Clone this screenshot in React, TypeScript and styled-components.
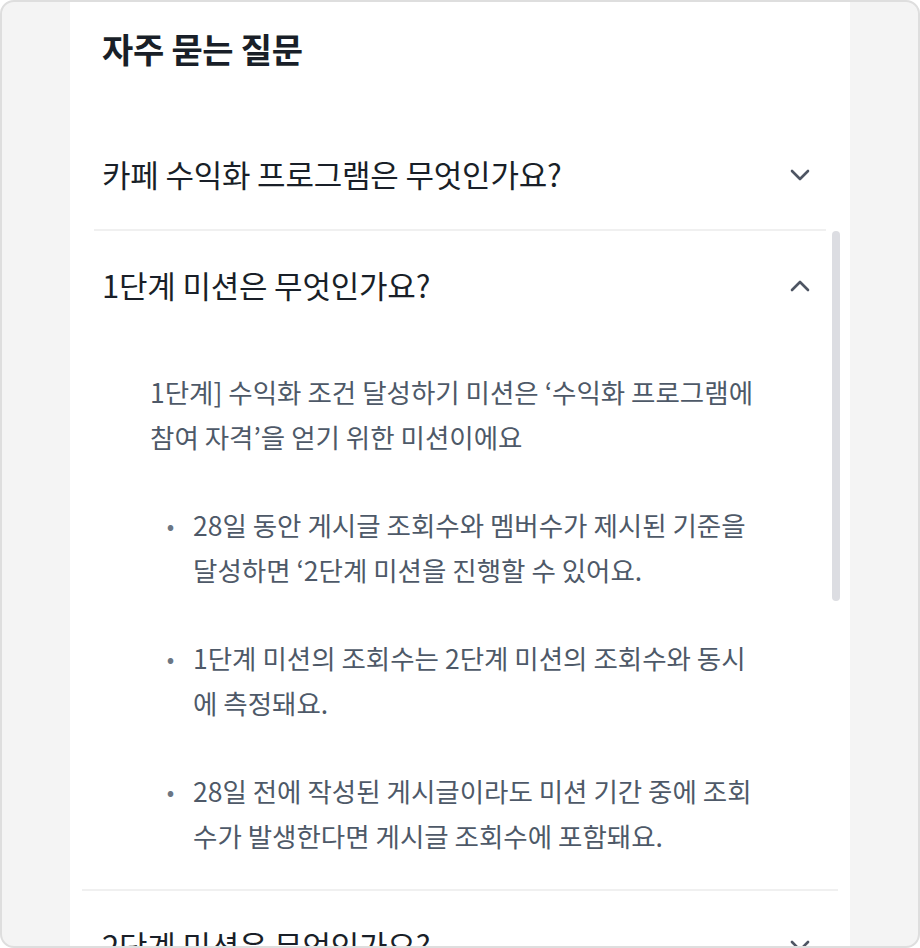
import React from "react";
import styled, { createGlobalStyle } from "styled-components";

const Global = createGlobalStyle`
  html, body { margin: 0; padding: 0; background: #ffffff; }
  body { font-family: "Noto Sans CJK KR", "Noto Sans", sans-serif; }
  * { box-sizing: border-box; }
`;

const Frame = styled.div`
  width: 920px;
  height: 948px;
  border: 2px solid #dedede;
  border-radius: 14px;
  background: #f4f4f4;
  overflow: hidden;
  display: flex;
  justify-content: center;
`;

const Panel = styled.main`
  width: 780px;
  height: 100%;
  background: #ffffff;
  display: flex;
  flex-direction: column;
  & > * { flex: none; }
`;

const Title = styled.h1`
  margin: 0;
  height: 119px;
  padding: 27px 32px 0;
  font-size: 34px;
  line-height: 40px;
  font-weight: 700;
  color: #191f28;
  letter-spacing: -0.3px;
`;

const TopItem = styled.div`
  margin: 0 24px;
  border-bottom: 2px solid #f0f0f0;
`;

const Row = styled.div<{ $padLeft: number; $padRight: number; $h: number }>`
  height: ${(p) => p.$h}px;
  padding: 0 ${(p) => p.$padRight}px 0 ${(p) => p.$padLeft}px;
  display: flex;
  align-items: center;
  justify-content: space-between;
`;

const Question = styled.span`
  margin-bottom: 4px;
  font-size: 31px;
  font-weight: 400;
  color: #191f28;
  letter-spacing: -0.2px;
`;

const ScrollArea = styled.div`
  position: relative;
  margin: 0 12px;
`;

const Thumb = styled.div`
  position: absolute;
  top: 0;
  right: -2px;
  width: 8px;
  height: 370px;
  border-radius: 4px;
  background: #dcdde2;
`;

const Item = styled.div<{ $divider?: boolean }>`
  border-bottom: ${(p) => (p.$divider ? "2px solid #f0f0f0" : "none")};
`;

const Answer = styled.div`
  padding: 28px 20px 31px 68px;
  color: #4e5968;
  font-size: 26.5px;
  line-height: 45px;
  white-space: nowrap;
`;

const Para = styled.p`
  margin: 0;
`;

const List = styled.ul`
  list-style: none;
  margin: 0;
  padding: 0;
`;

const ListItem = styled.li`
  margin-top: 43px;
  display: grid;
  grid-template-columns: 43px 1fr;
`;

const Dot = styled.span`
  color: #6b7684;
  font-size: 22px;
  text-align: center;
  padding-right: 2px;
`;

const ChevronSvg = styled.svg`
  flex: none;
  display: block;
`;

function Chevron({ up }: { up?: boolean }) {
  return (
    <ChevronSvg width="20" height="12" viewBox="0 0 20 12" fill="none">
      <path
        d={up ? "M2 10 L10 2 L18 10" : "M2 2 L10 10 L18 2"}
        stroke="#4e5563"
        strokeWidth="2.6"
        strokeLinecap="round"
        strokeLinejoin="round"
      />
    </ChevronSvg>
  );
}

const bullets: string[][] = [
  ["28일 동안 게시글 조회수와 멤버수가 제시된 기준을", "달성하면 ‘2단계 미션을 진행할 수 있어요."],
  ["1단계 미션의 조회수는 2단계 미션의 조회수와 동시", "에 측정돼요."],
  ["28일 전에 작성된 게시글이라도 미션 기간 중에 조회", "수가 발생한다면 게시글 조회수에 포함돼요."],
];

export default function App() {
  return (
    <>
      <Global />
      <Frame>
        <Panel>
          <Title>자주 묻는 질문</Title>
          <TopItem>
            <Row $padLeft={8} $padRight={16} $h={108}>
              <Question>카페 수익화 프로그램은 무엇인가요?</Question>
              <Chevron />
            </Row>
          </TopItem>
          <ScrollArea>
            <Thumb />
            <Item $divider>
              <Row $padLeft={20} $padRight={28} $h={110}>
                <Question>1단계 미션은 무엇인가요?</Question>
                <Chevron up />
              </Row>
              <Answer>
                <Para>
                  1단계] 수익화 조건 달성하기 미션은 ‘수익화 프로그램에
                  <br />
                  참여 자격’을 얻기 위한 미션이에요
                </Para>
                <List>
                  {bullets.map((lines, i) => (
                    <ListItem key={i}>
                      <Dot>•</Dot>
                      <span>
                        {lines[0]}
                        <br />
                        {lines[1]}
                      </span>
                    </ListItem>
                  ))}
                </List>
              </Answer>
            </Item>
            <Item>
              <Row $padLeft={20} $padRight={28} $h={110}>
                <Question>2단계 미션은 무엇인가요?</Question>
                <Chevron />
              </Row>
            </Item>
          </ScrollArea>
        </Panel>
      </Frame>
    </>
  );
}
